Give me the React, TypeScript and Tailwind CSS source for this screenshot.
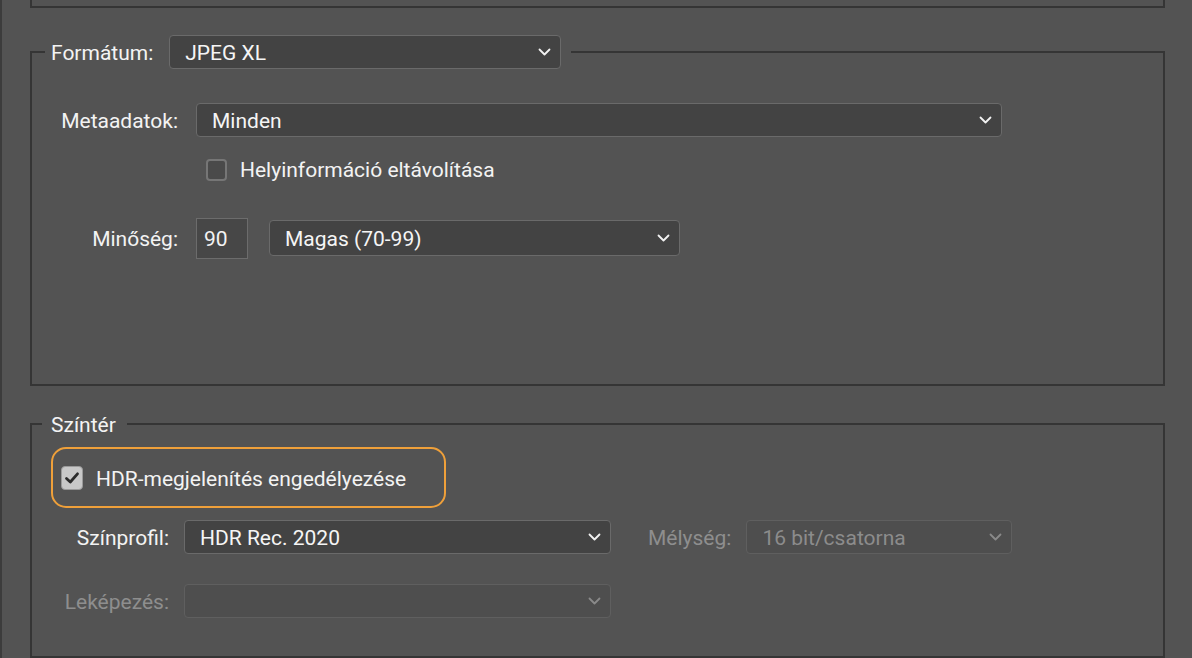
import React from 'react'

function Chevron({ disabled = false }: { disabled?: boolean }) {
  return (
    <svg width="13" height="8" viewBox="0 0 13 8" fill="none" className="shrink-0">
      <path
        d="M1.5 1.5 L6.5 6.5 L11.5 1.5"
        stroke={disabled ? '#8a8a8a' : '#f2f2f2'}
        strokeWidth="1.8"
        strokeLinecap="round"
        strokeLinejoin="round"
      />
    </svg>
  )
}

function Select({
  value,
  width,
  disabled = false,
  tall = false,
}: {
  value: string
  width: string
  disabled?: boolean
  tall?: boolean
}) {
  return (
    <div
      className={`${width} ${tall ? 'h-[36px]' : 'h-[34px]'} flex items-center justify-between pl-[15px] pr-[9px] rounded-[4px] border ${
        disabled
          ? 'bg-[#4e4e4e] border-[#5f5f5f] text-[#8c8c8c]'
          : 'bg-[#434343] border-[#6a6a6a] text-[#f5f5f5]'
      }`}
    >
      <span className="leading-none pt-[3px]">{value}</span>
      <Chevron disabled={disabled} />
    </div>
  )
}

function Checkbox({ checked }: { checked: boolean }) {
  if (checked) {
    return (
      <div className="w-[22px] h-[24px] rounded-[4px] bg-[#c8c8c8] border border-[#9a9a9a] flex items-center justify-center shrink-0">
        <svg width="16" height="14" viewBox="0 0 16 14" fill="none">
          <path d="M2.5 7.5 L6.3 11 L13.5 2.8" stroke="#2b2b2b" strokeWidth="2.8" strokeLinecap="round" strokeLinejoin="round" />
        </svg>
      </div>
    )
  }
  return <div className="w-[21px] h-[22px] rounded-[4px] bg-[#4a4a4a] border-2 border-[#767676] shrink-0" />
}

export default function App() {
  return (
    <div
      className="w-[1192px] h-[658px] bg-[#535353] overflow-hidden flex text-[21px] text-[#f3f3f3]"
      style={{ fontFamily: 'Roboto, "Liberation Sans", sans-serif' }}
    >
      <div className="w-[2px] bg-[#3c3c3c]" />
      <div className="ml-[28px] w-[1135px] flex flex-col">
        {/* previous section's bottom edge */}
        <div className="h-[8px] border-x-2 border-b-2 border-[#353535]" />

        {/* Format section */}
        <fieldset className="mt-[27px] h-[351px] border-2 border-[#353535] pt-[34px]">
          <legend className="ml-[13px] pl-[6px] pr-[10px] h-[34px] flex items-center gap-[16px]">
            <span className="pt-[3px]">Formátum:</span>
            <Select value="JPEG XL" width="w-[392px]" />
          </legend>

          <div className="grid grid-cols-[146px_1fr] gap-x-[18px] items-center">
            <div className="text-right pt-[3px]">Metaadatok:</div>
            <Select value="Minden" width="w-[806px]" />

            <div />
            <div className="mt-[20px] ml-[10px] flex items-center gap-[13px] h-[24px]">
              <Checkbox checked={false} />
              <span className="pt-[3px]">Helyinformáció eltávolítása</span>
            </div>

            <div className="mt-[36px] text-right pt-[3px]">Minőség:</div>
            <div className="mt-[36px] flex items-center gap-[21px]">
              <div className="w-[52px] h-[41px] bg-[#474747] border border-[#6c6c6c] flex items-center pl-[7px] pt-[3px]">
                90
              </div>
              <Select value="Magas (70-99)" width="w-[411px]" tall />
            </div>
          </div>
        </fieldset>

        {/* Colour space section */}
        <fieldset className="mt-[25px] flex-1 border-2 border-[#353535]">
          <legend className="ml-[10px] pl-[9px] pr-[11px] h-[26px] flex items-center pt-[4px]">Színtér</legend>

          <div className="mt-[10px] ml-[19px] w-[395px] h-[61px] rounded-[15px] border-2 border-[#efa03a] flex items-center pl-[8px] gap-[13px]">
            <Checkbox checked />
            <span className="pt-[4px]">HDR-megjelenítés engedélyezése</span>
          </div>

          <div className="mt-[12px] grid grid-cols-[137px_auto] gap-x-[15px] gap-y-[29px] items-center justify-start">
            <div className="text-right pt-[3px]">Színprofil:</div>
            <div className="flex items-center">
              <Select value="HDR Rec. 2020" width="w-[427px]" />
              <span className="ml-[37px] text-[#8e8e8e] pt-[3px]">Mélység:</span>
              <div className="ml-[15px]">
                <Select value="16 bit/csatorna" width="w-[266px]" disabled />
              </div>
            </div>

            <div className="text-right text-[#8e8e8e] pt-[3px]">Leképezés:</div>
            <Select value="" width="w-[427px]" disabled />
          </div>
        </fieldset>
      </div>
    </div>
  )
}
